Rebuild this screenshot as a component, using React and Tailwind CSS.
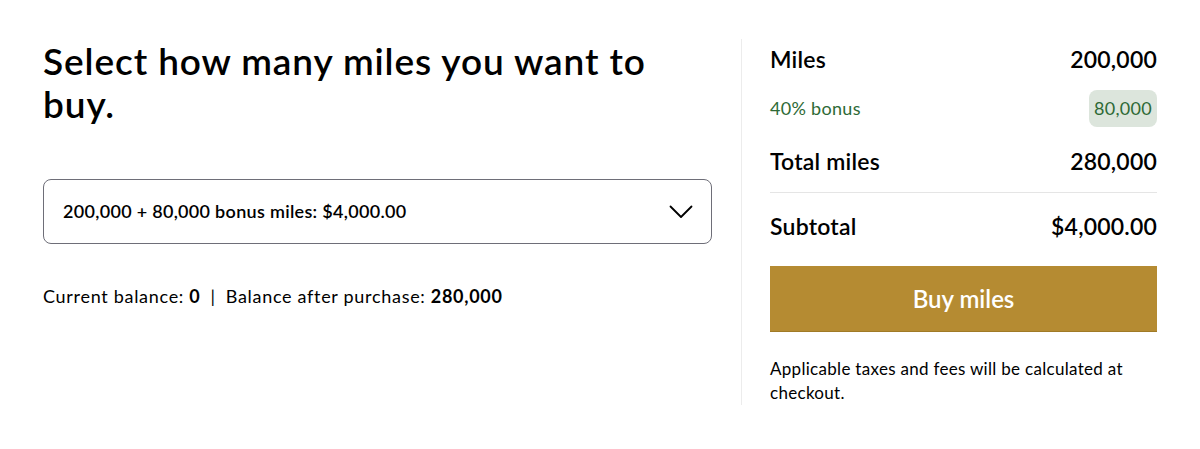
import React from 'react';

const font = { fontFamily: 'Lato, "Open Sans", sans-serif' };

const SummaryRow = ({ label, value }) => (
  <div className="flex items-center justify-between text-[23px] leading-[30px] font-semibold text-black tracking-[0.2px]">
    <span>{label}</span>
    <span>{value}</span>
  </div>
);

export default function App() {
  return (
    <div className="w-[1200px] h-[449px] bg-white flex pl-[43px] pt-[39px]" style={font}>
      {/* Left: selection */}
      <div className="w-[669px] flex flex-col">
        <h1 className="text-[37px] leading-[43px] font-semibold text-black tracking-[0.9px] w-[630px]">
          Select how many miles you want to buy.
        </h1>
        <button className="mt-[54px] h-[65px] w-full flex items-center justify-between border border-[#6e6e78] rounded-lg pl-[19px] pr-[18px] text-[18px] font-semibold text-black tracking-[0.3px]">
          <span>200,000 + 80,000 bonus miles: $4,000.00</span>
          <svg width="24" height="14" viewBox="0 0 24 14" fill="none" stroke="currentColor" strokeWidth="1.8" strokeLinecap="round" strokeLinejoin="round">
            <polyline points="1.5,1.5 12,12 22.5,1.5" />
          </svg>
        </button>
        <p className="mt-[39px] text-[18px] leading-[27px] text-black tracking-[0.7px]">
          Current balance: <span className="font-bold">0</span>
          <span className="mx-[10px]">|</span>
          Balance after purchase: <span className="font-bold">280,000</span>
        </p>
      </div>

      {/* Right: summary */}
      <div className="ml-[29px] h-[366px] border-l border-[#ececec] pl-[28px] w-[416px]">
        <div className="w-[387px] flex flex-col">
          <div className="mt-[5px]">
            <SummaryRow label="Miles" value="200,000" />
          </div>
          <div className="mt-[16px] flex items-center justify-between text-[18px] text-[#2e6a36] tracking-[0.3px]">
            <span>40% bonus</span>
            <span className="bg-[#dce5dc] rounded-lg px-[5px] h-[37px] flex items-center">80,000</span>
          </div>
          <div className="mt-[19px] pb-[16px] border-b border-[#e5e5e5]">
            <SummaryRow label="Total miles" value="280,000" />
          </div>
          <div className="mt-[18px]">
            <SummaryRow label="Subtotal" value="$4,000.00" />
          </div>
          <button className="mt-[25px] h-[66px] w-full bg-[#b58b32] text-white text-[24px] font-semibold border-b border-[#a07a26]">
            Buy miles
          </button>
          <p className="mt-[25px] text-[17px] leading-[24px] text-black tracking-[0.3px]">
            Applicable taxes and fees will be calculated at checkout.
          </p>
        </div>
      </div>
    </div>
  );
}
